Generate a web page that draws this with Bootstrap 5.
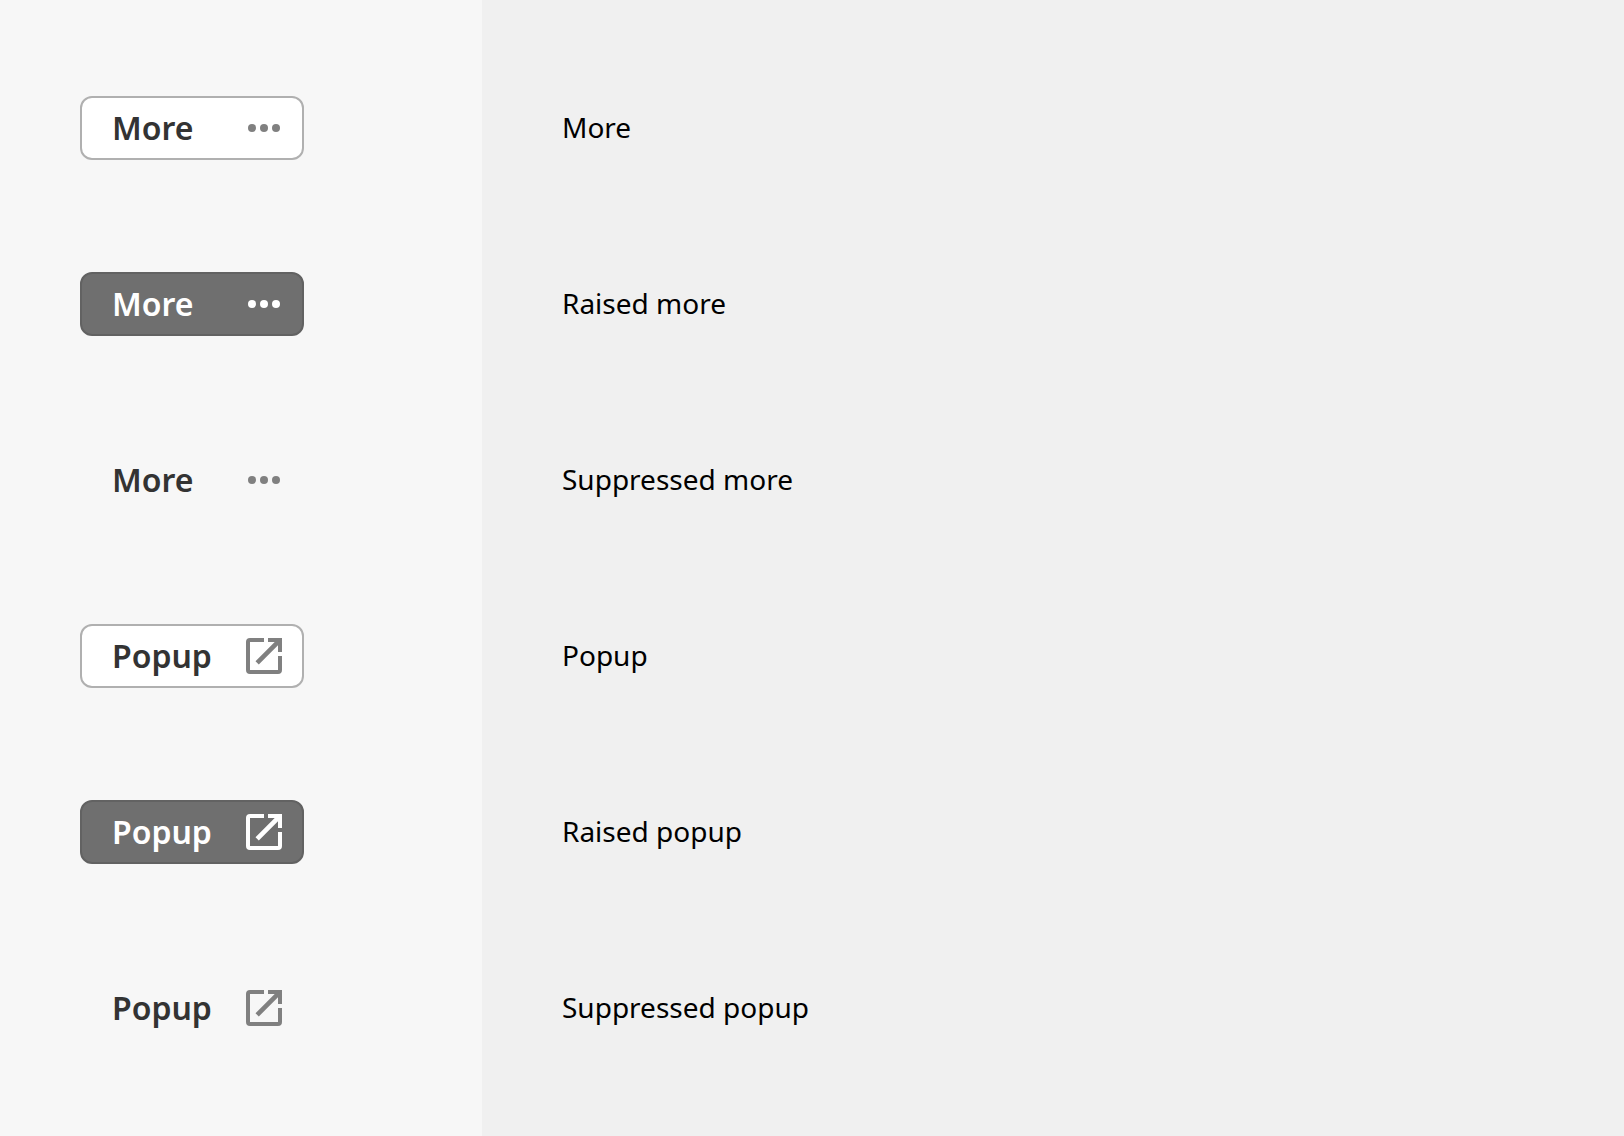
<!DOCTYPE html>
<html lang="en">
<head>
<meta charset="utf-8">
<meta name="viewport" content="width=device-width, initial-scale=1">
<title>Button types</title>
<link href="https://cdn.jsdelivr.net/npm/bootstrap@5.3.0/dist/css/bootstrap.min.css" rel="stylesheet">
<style>
body { font-family: "Noto Sans", sans-serif; background: #f0f0f0; color: #000; }
.samples { flex: 0 0 482px; background: #f7f7f7; }
.stack { padding: 96px 80px; gap: 112px; }
.btn-demo {
  --bs-btn-color: #333; --bs-btn-bg: #fff; --bs-btn-border-color: #b0b0b0;
  --bs-btn-hover-color: #333; --bs-btn-hover-bg: #f2f2f2; --bs-btn-hover-border-color: #999;
  --bs-btn-border-width: 2px; --bs-btn-border-radius: 12px;
  --bs-btn-padding-x: 14px; --bs-btn-padding-y: 0;
  --bs-btn-font-size: 32px; --bs-btn-font-weight: 600; --bs-btn-line-height: 44px;
  width: 224px; height: 64px; padding-left: 30px; color: #333;
}
.btn-demo svg { color: #808080; }
.btn-raised {
  --bs-btn-color: #fff; --bs-btn-bg: #6f6f6f; --bs-btn-border-color: #626262;
  --bs-btn-hover-color: #fff; --bs-btn-hover-bg: #626262; --bs-btn-hover-border-color: #555;
  color: #fff;
}
.btn-raised svg { color: #fff; }
.btn-suppressed { --bs-btn-bg: transparent; --bs-btn-border-color: transparent; }
.caption-line { height: 64px; font-size: 28px; line-height: 62px; }
</style>
<script src="https://cdn.jsdelivr.net/npm/bootstrap@5.3.0/dist/js/bootstrap.bundle.min.js"></script>
</head>
<body>
<svg class="d-none" aria-hidden="true">
  <symbol id="dots" viewBox="0 0 48 48">
    <g fill="currentColor"><circle cx="12" cy="24" r="4"/><circle cx="24" cy="24" r="4"/><circle cx="36" cy="24" r="4"/></g>
  </symbol>
  <symbol id="popup" viewBox="0 0 48 48">
    <path fill="currentColor" d="M24 6H10a4 4 0 0 0-4 4v28a4 4 0 0 0 4 4h28a4 4 0 0 0 4-4V24h-4v14H10V10h14zM28 6v4h6.700L15.500 29.200l3.300 3.300L38 13.300V20h4V6z"/>
  </symbol>
</svg>
<main class="d-flex min-vh-100">
  <section class="samples stack d-flex flex-column align-items-start">
    <button type="button" class="btn btn-demo d-flex align-items-center justify-content-between">More<svg width="48" height="48" aria-hidden="true"><use href="#dots"/></svg></button>
    <button type="button" class="btn btn-demo btn-raised d-flex align-items-center justify-content-between">More<svg width="48" height="48" aria-hidden="true"><use href="#dots"/></svg></button>
    <button type="button" class="btn btn-demo btn-suppressed d-flex align-items-center justify-content-between">More<svg width="48" height="48" aria-hidden="true"><use href="#dots"/></svg></button>
    <button type="button" class="btn btn-demo d-flex align-items-center justify-content-between">Popup<svg width="48" height="48" aria-hidden="true"><use href="#popup"/></svg></button>
    <button type="button" class="btn btn-demo btn-raised d-flex align-items-center justify-content-between">Popup<svg width="48" height="48" aria-hidden="true"><use href="#popup"/></svg></button>
    <button type="button" class="btn btn-demo btn-suppressed d-flex align-items-center justify-content-between">Popup<svg width="48" height="48" aria-hidden="true"><use href="#popup"/></svg></button>
  </section>
  <section class="stack d-flex flex-column flex-grow-1">
    <p class="caption-line m-0">More</p>
    <p class="caption-line m-0">Raised more</p>
    <p class="caption-line m-0">Suppressed more</p>
    <p class="caption-line m-0">Popup</p>
    <p class="caption-line m-0">Raised popup</p>
    <p class="caption-line m-0">Suppressed popup</p>
  </section>
</main>
</body>
</html>
